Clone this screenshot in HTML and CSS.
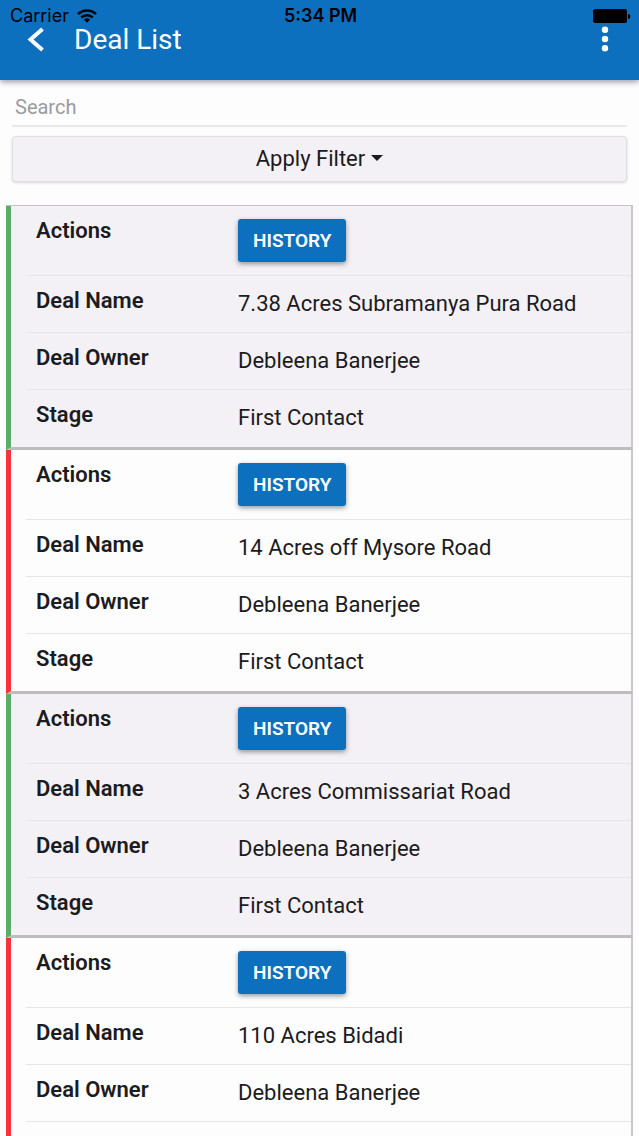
FILE: index.html
```html
<!DOCTYPE html>
<html lang="en">
<head>
    <meta charset="utf-8">
    <meta name="viewport" content="width=device-width, initial-scale=1">
    <title>Deal List</title>
    <link rel="stylesheet" href="styles.css">
</head>
<body>
    <header class="toolbar">
        <div class="status-bar">
            <span class="carrier">Carrier
                <svg class="wifi" viewBox="0 0 20 14" width="20" height="14" aria-hidden="true">
                    <g fill="none" stroke="#000" stroke-width="2.5">
                        <path d="M1 5.2a12.8 12.8 0 0 1 18 0"/>
                        <path d="M4.3 8.5a8.1 8.1 0 0 1 11.4 0"/>
                    </g>
                    <path d="M10 13.8L6.9 10.6a4.4 4.4 0 0 1 6.2 0z"/>
                </svg>
            </span>
            <span class="clock">5:34 PM</span>
            <svg class="battery" viewBox="0 0 38 14" width="38" height="14" aria-hidden="true">
                <rect width="34" height="14" rx="2"/>
                <path d="M35 5c3 0 3 5 0 5z"/>
            </svg>
        </div>
        <button class="icon-button" aria-label="Back">
            <svg viewBox="0 0 18 26" width="18" height="26">
                <path d="M16.5 2L4.5 12.5l12 10.5" fill="none" stroke="#fff" stroke-width="4"/>
            </svg>
        </button>
        <h1>Deal List</h1>
        <button class="icon-button menu" aria-label="Menu">
            <svg viewBox="0 0 8 28" width="8" height="28">
                <g fill="#fff">
                    <circle cx="4" cy="3.7" r="3.2"/>
                    <circle cx="4" cy="13" r="3.2"/>
                    <circle cx="4" cy="22.3" r="3.2"/>
                </g>
            </svg>
        </button>
    </header>

    <main>
        <div class="filters">
            <input class="search" type="search" placeholder="Search" aria-label="Search">
            <button class="filter-button">Apply Filter <span class="caret"></span></button>
        </div>

        <div class="deals">
            <table class="deal open">
                <tr class="actions"><th scope="row">Actions</th><td><button class="history">HISTORY</button></td></tr>
                <tr><th scope="row">Deal Name</th><td>7.38 Acres Subramanya Pura Road</td></tr>
                <tr><th scope="row">Deal Owner</th><td>Debleena Banerjee</td></tr>
                <tr><th scope="row">Stage</th><td>First Contact</td></tr>
            </table>
            <table class="deal overdue">
                <tr class="actions"><th scope="row">Actions</th><td><button class="history">HISTORY</button></td></tr>
                <tr><th scope="row">Deal Name</th><td>14 Acres off Mysore Road</td></tr>
                <tr><th scope="row">Deal Owner</th><td>Debleena Banerjee</td></tr>
                <tr><th scope="row">Stage</th><td>First Contact</td></tr>
            </table>
            <table class="deal open">
                <tr class="actions"><th scope="row">Actions</th><td><button class="history">HISTORY</button></td></tr>
                <tr><th scope="row">Deal Name</th><td>3 Acres Commissariat Road</td></tr>
                <tr><th scope="row">Deal Owner</th><td>Debleena Banerjee</td></tr>
                <tr><th scope="row">Stage</th><td>First Contact</td></tr>
            </table>
            <table class="deal overdue">
                <tr class="actions"><th scope="row">Actions</th><td><button class="history">HISTORY</button></td></tr>
                <tr><th scope="row">Deal Name</th><td>110 Acres Bidadi</td></tr>
                <tr><th scope="row">Deal Owner</th><td>Debleena Banerjee</td></tr>
                <tr><th scope="row"></th><td></td></tr>
            </table>
        </div>
    </main>
</body>
</html>
```

FILE: styles.css
```css
* {
    box-sizing: border-box;
}
body {
    display: flex;
    flex-direction: column;
    height: 100vh;
    margin: 0;
    overflow: hidden;
    background-color: #fefdfe;
    color: #1b1b20;
    font-family: Roboto, sans-serif;
    font-size: 22px;
}
button {
    font-family: inherit;
    cursor: pointer;
}

/* header */
.toolbar {
    position: relative;
    display: flex;
    align-items: center;
    flex-shrink: 0;
    height: 80px;
    padding: 0 26px;
    background-color: #0c70bf;
    box-shadow: 0 2px 6px rgba(0, 0, 40, 0.4);
}
.toolbar h1 {
    flex: 1;
    margin: 0 0 0 30px;
    color: #fff;
    font-size: 28px;
    font-weight: 400;
    line-height: 32px;
}
.icon-button {
    display: flex;
    padding: 0;
    border: none;
    background: none;
}
.menu {
    margin-right: 4px;
}
.status-bar {
    position: absolute;
    top: 6px;
    left: 0;
    display: grid;
    grid-template-columns: 1fr auto 1fr;
    align-items: center;
    width: 100%;
    padding: 0 8px 0 10px;
    color: #000;
    font-family: Inter, sans-serif;
    font-size: 18px;
    line-height: 20px;
}
.carrier {
    display: flex;
    align-items: center;
    gap: 8px;
}
.clock {
    font-weight: 600;
}
.battery {
    justify-self: end;
}

/* search and filter */
main {
    flex: 1;
    overflow-y: auto;
    scrollbar-width: none;
}
.filters {
    display: flex;
    flex-direction: column;
    gap: 9px;
    padding: 7px 12px 0;
}
.search {
    height: 40px;
    padding: 2px 3px 0;
    border: none;
    border-bottom: 2px solid #e9e8ec;
    background: none;
    color: inherit;
    font-family: inherit;
    font-size: 20px;
    outline: none;
}
.search::placeholder {
    color: #9b9a9e;
}
.filter-button {
    display: flex;
    align-items: center;
    justify-content: center;
    gap: 6px;
    height: 46px;
    padding: 0 6px 2px;
    border: 1px solid #dfdee2;
    border-radius: 4px;
    background-color: #f3f1f5;
    box-shadow: 0 1px 3px rgba(0, 0, 0, 0.15);
    color: #1b1b20;
    font-size: 22px;
}
.caret {
    border: 6px solid transparent;
    border-top-color: #1b1b20;
    border-bottom: none;
}

/* deals */
.deals {
    margin: 23px 6px 0;
    border-top: 1px solid #c4c3c6;
}
.deal {
    display: block;
    padding-left: 15px;
    border-right: 2px solid #c9c8cb;
    border-bottom: 3px solid #bdbcbf;
    border-left: 5px solid #5aac6b;
    border-spacing: 0;
}
.deal.open {
    background-color: #f3f1f5;
}
.deal.overdue {
    border-left-color: #f8333f;
}
.deal tbody {
    display: block;
}
.deal tr {
    display: grid;
    grid-template-columns: 202px 1fr;
    height: 57px;
    padding-left: 10px;
    border-bottom: 1px solid #e6e5e9;
}
.deal tr.actions {
    height: 70px;
}
.deal tr:last-child {
    border-bottom-color: transparent;
}
.deal th,
.deal td {
    padding: 0;
    line-height: 26px;
    text-align: left;
}
.deal th {
    padding-top: 12px;
    font-weight: 600;
}
.deal td {
    padding-top: 15px;
}
.deal .actions td {
    padding-top: 13px;
}
.history {
    display: block;
    height: 43px;
    padding: 0 15px;
    border: none;
    border-radius: 3px;
    background-color: #0c70bf;
    box-shadow: 0 2px 5px rgba(0, 0, 0, 0.4);
    color: #fff;
    font-size: 19px;
    font-weight: 600;
}
```
